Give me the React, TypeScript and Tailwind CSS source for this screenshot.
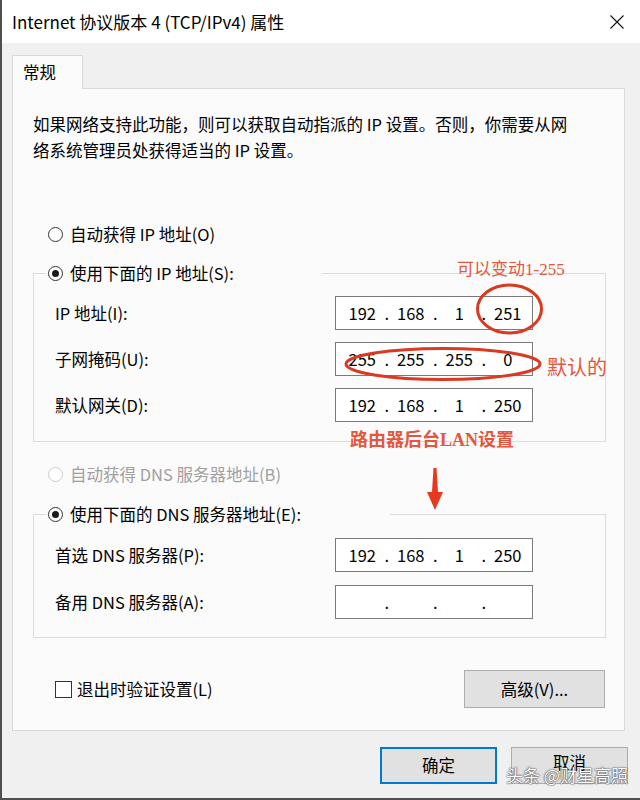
import React from "react";

const FONT = "font-['Noto_Sans_CJK_SC',sans-serif]";
const RED_FONT = "font-['Liberation_Serif','Noto_Sans_CJK_SC',serif]";

function Radio({ checked, disabled }: { checked?: boolean; disabled?: boolean }) {
  return (
    <span
      className={`flex h-[15px] w-[15px] shrink-0 items-center justify-center rounded-full border bg-white ${
        disabled ? "border-[#cccccc]" : "border-[#333333]"
      }`}
    >
      {checked && <span className="h-[7px] w-[7px] rounded-full bg-[#1a1a1a]" />}
    </span>
  );
}

function IpBox({ parts }: { parts: string[] }) {
  return (
    <div className="flex h-[34px] w-[198px] items-center border border-[#7a7a7a] bg-white pl-[4px] pr-[2px]">
      {parts.map((p, i) => (
        <React.Fragment key={i}>
          <span className="flex-1 text-center">{p}</span>
          {i < 3 && <span className="w-[4px] text-center">.</span>}
        </React.Fragment>
      ))}
    </div>
  );
}

function Row({ label, parts }: { label: string; parts: string[] }) {
  return (
    <div className="flex items-center pl-[21px]">
      <span className="w-[280px] whitespace-nowrap">{label}</span>
      <IpBox parts={parts} />
    </div>
  );
}

export default function App() {
  return (
    <div
      className={`relative flex h-[800px] w-[640px] flex-col overflow-hidden border-b-2 border-l-2 border-[#4f4f4f] bg-[#f0f0f0] text-[16.5px] text-black ${FONT}`}
    >
      {/* title bar */}
      <div className="flex h-[43px] shrink-0 items-center justify-between bg-white pl-[10px] pr-[16px]">
        <span className="whitespace-nowrap text-[17px]">Internet 协议版本 4 (TCP/IPv4) 属性</span>
        <svg width="14" height="14" viewBox="0 0 14 14">
          <path d="M0.5 0.5 L13.5 13.5 M13.5 0.5 L0.5 13.5" stroke="#111" strokeWidth="1.1" fill="none" />
        </svg>
      </div>

      {/* tab */}
      <div className="flex pl-[10px] pt-[12px]">
        <div className="relative z-10 mb-[-1px] h-[34px] w-[71px] border-l border-r border-t border-[#d9d9d9] bg-[#fbfbfb] pl-[10px] leading-[33px]">
          常规
        </div>
      </div>

      {/* panel */}
      <div className="ml-[10px] flex h-[643px] w-[613px] flex-col border border-[#d9d9d9] bg-[#fbfbfb] pl-[20px] pr-[18px] pt-[22px]">
        <p className="whitespace-nowrap leading-[26px]">
          如果网络支持此功能，则可以获取自动指派的 IP 设置。否则，你需要从网
          <br />
          络系统管理员处获得适当的 IP 设置。
        </p>

        <div className="mt-[59px] flex h-[24px] items-center gap-[7px] pl-[15px]">
          <Radio />
          <span>自动获得 IP 地址(O)</span>
        </div>

        <fieldset className="mt-[15px] border border-[#dcdcdc] pb-[19px]">
          <legend className="ml-[12px] flex h-[24px] w-[276px] items-center gap-[7px] pl-[2px]">
            <Radio checked />
            <span className="whitespace-nowrap">使用下面的 IP 地址(S):</span>
          </legend>
          <div className="mt-[11px] flex flex-col gap-[12px]">
            <Row label="IP 地址(I):" parts={["192", "168", "1", "251"]} />
            <Row label="子网掩码(U):" parts={["255", "255", "255", "0"]} />
            <Row label="默认网关(D):" parts={["192", "168", "1", "250"]} />
          </div>
        </fieldset>

        <div className="mt-[20px] flex h-[24px] items-center gap-[7px] pl-[15px] text-[#a0a0a0]">
          <Radio disabled />
          <span>自动获得 DNS 服务器地址(B)</span>
        </div>

        <fieldset className="mt-[16px] border border-[#dcdcdc] pb-[18px]">
          <legend className="ml-[12px] flex h-[24px] w-[344px] items-center gap-[7px] pl-[2px]">
            <Radio checked />
            <span className="whitespace-nowrap">使用下面的 DNS 服务器地址(E):</span>
          </legend>
          <div className="mt-[12px] flex flex-col gap-[13px]">
            <Row label="首选 DNS 服务器(P):" parts={["192", "168", "1", "250"]} />
            <Row label="备用 DNS 服务器(A):" parts={["", "", "", ""]} />
          </div>
        </fieldset>

        <div className="mt-[32px] flex items-center justify-between pl-[22px] pr-[1px]">
          <div className="flex items-center gap-[5px]">
            <span className="h-[17px] w-[17px] border border-[#333333] bg-white" />
            <span>退出时验证设置(L)</span>
          </div>
          <button className="flex h-[38px] w-[141px] items-center justify-center border border-[#adadad] bg-[#e1e1e1]">
            高级(V)...
          </button>
        </div>
      </div>

      {/* bottom buttons */}
      <div className="mt-[16px] flex justify-end gap-[14px] pr-[12px]">
        <button className="flex h-[37px] w-[117px] items-center justify-center border-2 border-[#0078d7] bg-[#e1e1e1]">
          确定
        </button>
        <button className="flex h-[37px] w-[117px] items-center justify-center border border-[#adadad] bg-[#e1e1e1] pb-[6px]">
          取消
        </button>
      </div>

      {/* red annotations */}
      <svg className="pointer-events-none absolute left-[-2px] top-0" width="640" height="800" viewBox="0 0 640 800">
        <ellipse cx="509.5" cy="309" rx="32" ry="24" fill="none" stroke="#d93a22" strokeWidth="3" />
        <ellipse cx="443" cy="364" rx="97" ry="15.5" fill="none" stroke="#d93a22" strokeWidth="3" />
        <polygon points="433.5,468 436.5,468 438,492 443,492 435,510 427,492 432,492" fill="#e8381f" />
      </svg>
      <span className={`absolute left-[455px] top-[260px] whitespace-nowrap text-[17px] leading-[20px] text-[#e3573f] ${RED_FONT}`}>
        可以变动1-255
      </span>
      <span className={`absolute left-[545px] top-[358px] whitespace-nowrap text-[20px] leading-[20px] text-[#e3573f] ${RED_FONT}`}>
        默认的
      </span>
      <span className={`absolute left-[348px] top-[430px] whitespace-nowrap text-[18px] font-semibold leading-[20px] text-[#e3573f] ${RED_FONT}`}>
        路由器后台LAN设置
      </span>

      {/* watermark */}
      <span className="absolute left-[504px] top-[764px] whitespace-nowrap text-[17px] leading-[22px] text-white [text-shadow:0_0_2px_#333,0_0_1px_#333]">
        头条 @财星高照
      </span>
    </div>
  );
}
